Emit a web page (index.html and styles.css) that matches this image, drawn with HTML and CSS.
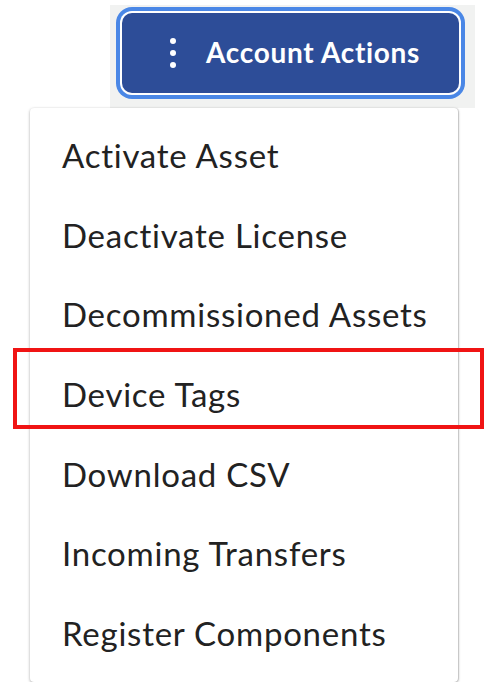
FILE: index.html
```html
<!DOCTYPE html>
<html>
<head>
<meta charset="utf-8">
<link rel="stylesheet" href="styles.css">
</head>
<body>
  <div class="btn-area">
    <button class="actions-btn">
      <span class="kebab"><i></i><i></i><i></i></span>
      <span class="btn-label">Account Actions</span>
    </button>
  </div>
  <ul class="menu">
    <li class="menu-item">Activate Asset</li>
    <li class="menu-item">Deactivate License</li>
    <li class="menu-item">Decommissioned Assets</li>
    <li class="menu-item highlight">Device Tags</li>
    <li class="menu-item">Download CSV</li>
    <li class="menu-item">Incoming Transfers</li>
    <li class="menu-item">Register Components</li>
  </ul>
</body>
</html>
```

FILE: styles.css
```css
html, body {
  margin: 0;
  padding: 0;
  background: #ffffff;
  font-family: Lato, "Open Sans", sans-serif;
}

.btn-area {
  margin-top: 5px;
  margin-left: 110px;
  width: 365px;
  box-sizing: border-box;
  padding: 8px 16px 15px 12px;
  background: #f1f2f1;
}

.actions-btn {
  display: flex;
  align-items: center;
  box-sizing: border-box;
  width: 337px;
  height: 80px;
  padding: 0 0 0 48px;
  border: none;
  border-radius: 10px;
  background: #2d4d98;
  color: #ffffff;
  font-family: Lato, sans-serif;
  font-weight: 700;
  font-size: 28px;
  letter-spacing: 0.7px;
  box-shadow: 0 0 0 2px #ffffff, 0 0 0 6px #4a87e6;
  cursor: pointer;
}

.kebab {
  display: flex;
  flex-direction: column;
  gap: 6px;
  width: 6px;
  margin-right: 30px;
}

.kebab i {
  display: block;
  width: 6px;
  height: 6px;
  border-radius: 50%;
  background: #ffffff;
}

.btn-label {
  line-height: 1;
  padding-bottom: 2px;
}

.menu {
  position: relative;
  list-style: none;
  margin: 0 0 0 30px;
  padding: 8px 0;
  width: 428px;
  box-sizing: border-box;
  background: #ffffff;
  border-radius: 4px;
  box-shadow: 0 1px 3px rgba(0, 0, 0, 0.35), 1px 0 1px rgba(0, 0, 0, 0.12);
}

.menu-item {
  position: relative;
  height: 79.67px;
  line-height: 79.67px;
  padding-left: 32px;
  font-size: 33px;
  letter-spacing: 0.75px;
  color: #222222;
  white-space: nowrap;
}

.highlight::after {
  content: "";
  position: absolute;
  top: -7px;
  left: -17px;
  right: -26px;
  height: 81px;
  box-sizing: border-box;
  border: 4px solid #f01414;
  pointer-events: none;
}
```
